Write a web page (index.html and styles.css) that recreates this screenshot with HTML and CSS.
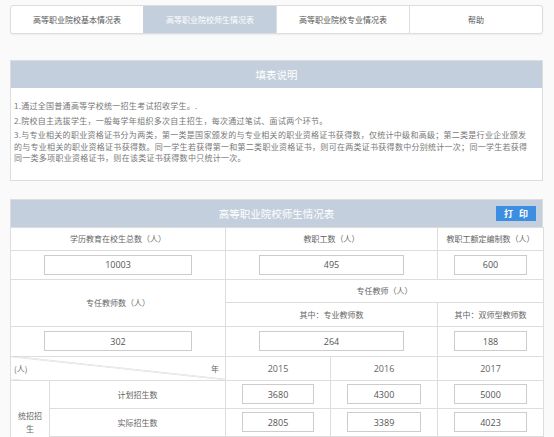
FILE: index.html
```html
<!DOCTYPE html>
<html lang="zh-CN">
<head>
<meta charset="utf-8">
<title>高等职业院校师生情况表</title>
<link rel="stylesheet" href="styles.css">
</head>
<body>
<div class="page">
  <nav class="tabs">
    <a class="tab">高等职业院校基本情况表</a>
    <a class="tab active">高等职业院校师生情况表</a>
    <a class="tab">高等职业院校专业情况表</a>
    <a class="tab">帮助</a>
  </nav>

  <section class="notes">
    <h2 class="panel-title">填表说明</h2>
    <div class="notes-body">
      <p>1.通过全国普通高等学校统一招生考试招收学生。.</p>
      <p>2.院校自主选拔学生，一般每学年组织多次自主招生，每次通过笔试、面试两个环节。</p>
      <p>3.与专业相关的职业资格证书分为两类，第一类是国家颁发的与专业相关的职业资格证书获得数，仅统计中级和高级；第二类是行业企业颁发<br>的与专业相关的职业资格证书获得数。同一学生若获得第一和第二类职业资格证书，则可在两类证书获得数中分别统计一次；同一学生若获得<br>同一类多项职业资格证书，则在该类证书获得数中只统计一次。</p>
    </div>
  </section>

  <section class="sheet">
    <div class="sheet-head">
      <span></span>
      <h2 class="sheet-title">高等职业院校师生情况表</h2>
      <button class="print" type="button">打 印</button>
    </div>
    <table class="grid">
      <colgroup>
        <col class="c-a"><col class="c-b"><col class="c-c"><col class="c-d"><col class="c-e">
      </colgroup>
      <tr class="r-label">
        <td colspan="2">学历教育在校生总数（人）</td>
        <td colspan="2">教职工数（人）</td>
        <td>教职工额定编制数（人）</td>
      </tr>
      <tr class="r-input">
        <td colspan="2"><input class="field" type="text" value="10003" readonly></td>
        <td colspan="2"><input class="field" type="text" value="495" readonly></td>
        <td><input class="field" type="text" value="600" readonly></td>
      </tr>
      <tr class="r-label">
        <td colspan="2" rowspan="2">专任教师数（人）</td>
        <td colspan="3">专任教师（人）</td>
      </tr>
      <tr class="r-label2">
        <td colspan="2">其中：专业教师数</td>
        <td>其中：双师型教师数</td>
      </tr>
      <tr class="r-input2">
        <td colspan="2"><input class="field" type="text" value="302" readonly></td>
        <td colspan="2"><input class="field" type="text" value="264" readonly></td>
        <td><input class="field" type="text" value="188" readonly></td>
      </tr>
      <tr class="r-label2">
        <td colspan="2" class="diag"><div class="diag-in"><span>(人)</span><span>年</span></div></td>
        <td class="year">2015</td>
        <td class="year">2016</td>
        <td class="year">2017</td>
      </tr>
      <tr class="r-data">
        <td rowspan="3" class="group">统招招生</td>
        <td>计划招生数</td>
        <td><input class="field" type="text" value="3680" readonly></td>
        <td><input class="field" type="text" value="4300" readonly></td>
        <td><input class="field" type="text" value="5000" readonly></td>
      </tr>
      <tr class="r-data">
        <td>实际招生数</td>
        <td><input class="field" type="text" value="2805" readonly></td>
        <td><input class="field" type="text" value="3389" readonly></td>
        <td><input class="field" type="text" value="4023" readonly></td>
      </tr>
      <tr class="r-data">
        <td></td>
        <td><input class="field" type="text" value="" readonly></td>
        <td><input class="field" type="text" value="" readonly></td>
        <td><input class="field" type="text" value="" readonly></td>
      </tr>
    </table>
  </section>
</div>
</body>
</html>
```

FILE: styles.css
```css
html, body {
  margin: 0;
  background: #fafafa;
}

body {
  font-family: "Noto Sans CJK SC", "Noto Sans", sans-serif;
  font-size: 8px;
  color: #666;
}

.page {
  width: 533px;
  padding: 5px 0 0 10px;
}

/* tabs */
.tabs {
  display: flex;
  height: 29px;
  box-sizing: border-box;
  border: 1px solid #ddd;
  border-radius: 3px;
  background: #fff;
  box-shadow: 0 1px 2px rgba(0, 0, 0, 0.06);
  overflow: hidden;
}

.tab {
  flex: 1;
  display: flex;
  align-items: center;
  justify-content: center;
  border-left: 1px solid #ddd;
  color: #555;
}

.tab:first-child {
  border-left: 0;
}

.tab.active {
  background: #c3cfdc;
  color: #fff;
  border-left-color: #c3cfdc;
}

/* notes */
.notes {
  margin-top: 26px;
  border: 1px solid #ddd;
  background: #fff;
}

.panel-title {
  margin: 0;
  height: 27px;
  display: flex;
  align-items: center;
  justify-content: center;
  background: #c3cfdc;
  color: #fff;
  font-size: 10.5px;
  font-weight: normal;
}

.notes-body {
  padding: 12px 0 16px 3px;
  color: #777;
  letter-spacing: 0.28px;
  white-space: nowrap;
}

.notes-body p {
  margin: 0 0 3px;
  line-height: 11.5px;
}

.notes-body p:last-child {
  margin-bottom: 0;
}

/* sheet */
.sheet {
  margin-top: 18px;
  background: #fff;
}

.sheet-head {
  display: grid;
  grid-template-columns: 1fr auto 1fr;
  align-items: center;
  height: 28px;
  box-sizing: border-box;
  background: #c3cfdc;
  border: 1px solid #ddd;
  border-bottom: 0;
}

.sheet-title {
  margin: 0;
  font-size: 10.5px;
  font-weight: normal;
  color: #fff;
}

.print {
  justify-self: end;
  margin-right: 6px;
  width: 40px;
  height: 15px;
  padding: 0;
  border: 0;
  background: #3d8ee0;
  color: #fff;
  font-family: "Noto Sans CJK SC", sans-serif;
  font-size: 9px;
  font-weight: bold;
  letter-spacing: 2px;
  text-indent: 2px;
}

.grid {
  width: 533px;
  table-layout: fixed;
  border-collapse: collapse;
  background: #fff;
}

.c-a { width: 39px; }
.c-b { width: 176px; }
.c-c { width: 105px; }
.c-d { width: 107px; }
.c-e { width: 106px; }

.grid td {
  border: 1px solid #ddd;
  padding: 0;
  text-align: center;
  vertical-align: middle;
  color: #666;
}

.r-label { height: 23px; }
.r-label2 { height: 24px; }
.r-input { height: 29px; }
.r-input2 { height: 30px; }
.r-data { height: 28px; }

.field {
  display: block;
  margin: 0 auto;
  width: 69%;
  height: 20px;
  box-sizing: border-box;
  border: 1px solid #ccc;
  background: #fff;
  padding: 0;
  text-align: center;
  font-family: "Open Sans", "Noto Sans", sans-serif;
  font-size: 9px;
  color: #555;
  outline: none;
}

.year {
  font-family: "Open Sans", "Noto Sans", sans-serif;
  font-size: 9px;
}

.diag {
  background: linear-gradient(to top right, transparent calc(50% - 0.8px), #ccc, transparent calc(50% + 0.8px));
}

.diag-in {
  display: flex;
  justify-content: space-between;
  padding: 0 6px 0 3px;
}

.grid td.group {
  line-height: 13px;
  padding: 0 6px;
  word-break: break-all;
}
```
